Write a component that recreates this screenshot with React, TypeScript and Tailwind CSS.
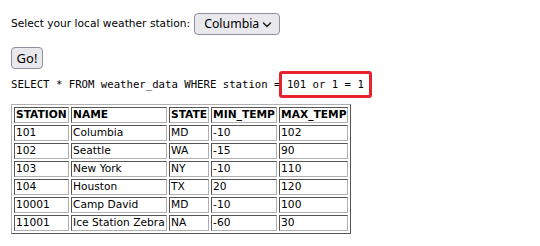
import React from "react";

const rows = [
  ["101", "Columbia", "MD", "-10", "102"],
  ["102", "Seattle", "WA", "-15", "90"],
  ["103", "New York", "NY", "-10", "110"],
  ["104", "Houston", "TX", "20", "120"],
  ["10001", "Camp David", "MD", "-10", "100"],
  ["11001", "Ice Station Zebra", "NA", "-60", "30"],
];

const headers = ["STATION", "NAME", "STATE", "MIN_TEMP", "MAX_TEMP"];
const widths = ["w-[55px]", "w-[96px]", "w-[40px]", "w-[66px]", "w-[69px]"];

const cellCls =
  "border border-t-[#555555] border-l-[#555555] border-b-[#b0b0b0] border-r-[#b0b0b0] px-[1px] py-0 leading-[14px] h-[16px] text-left whitespace-nowrap";

export default function App() {
  return (
    <div
      className="pl-[11px] pt-[13px] text-black text-[10.67px] bg-white min-h-[246px]"
      style={{ fontFamily: '"DejaVu Sans", sans-serif' }}
    >
      <div className="flex items-center h-[22px] gap-[4px]">
        <span className="leading-[14px]">Select your local weather station:</span>
        <div className="relative">
          <select
            defaultValue="101"
            className="appearance-none h-[22px] w-[86px] rounded-[4px] border border-[#8f8f9d] bg-[#e9e9ed] pl-[9px] pr-[18px] text-[12.3px] text-black leading-[18px] outline-none"
            style={{ fontFamily: '"Noto Sans", sans-serif' }}
          >
            <option value="101">Columbia</option>
            <option value="102">Seattle</option>
            <option value="103">New York</option>
            <option value="104">Houston</option>
            <option value="10001">Camp David</option>
            <option value="11001">Ice Station Zebra</option>
          </select>
          <svg
            className="pointer-events-none absolute right-[8px] top-[9px]"
            width="10"
            height="6"
            viewBox="0 0 10 6"
          >
            <path d="M1.5 1 L5 4.5 L8.5 1" fill="none" stroke="#1a1a1a" strokeWidth="1.4" strokeLinecap="round" strokeLinejoin="round" />
          </svg>
        </div>
      </div>

      <button
        className="mt-[12px] flex items-center justify-center h-[22px] w-[32px] rounded-[4px] border border-[#8f8f9d] bg-[#e9e9ed] text-[13px] leading-[18px] text-black"
        style={{ fontFamily: '"Noto Sans", sans-serif' }}
      >
        Go!
      </button>

      <div
        className="mt-[9px] leading-[14px] whitespace-pre text-[10.67px]"
        style={{ fontFamily: '"DejaVu Sans Mono", monospace' }}
      >
        {"SELECT * FROM weather_data WHERE station = "}
        <span className="relative">
          {"101 or 1 = 1"}
          <span className="absolute left-[-8px] right-[-8px] top-[-7px] bottom-[-7px] rounded-[3px] border-[3px] border-[#e8212f]" />
        </span>
      </div>

      <table className="mt-[12px] border-separate border-spacing-[2px] border border-t-[#b0b0b0] border-l-[#b0b0b0] border-b-[#555555] border-r-[#555555]">
        <thead>
          <tr>
            {headers.map((h, i) => (
              <th key={h} className={`${cellCls} ${widths[i]} font-bold`}>
                {h}
              </th>
            ))}
          </tr>
        </thead>
        <tbody>
          {rows.map((r) => (
            <tr key={r[0]}>
              {r.map((c, i) => (
                <td key={i} className={`${cellCls} ${widths[i]}`}>
                  {c}
                </td>
              ))}
            </tr>
          ))}
        </tbody>
      </table>
    </div>
  );
}
